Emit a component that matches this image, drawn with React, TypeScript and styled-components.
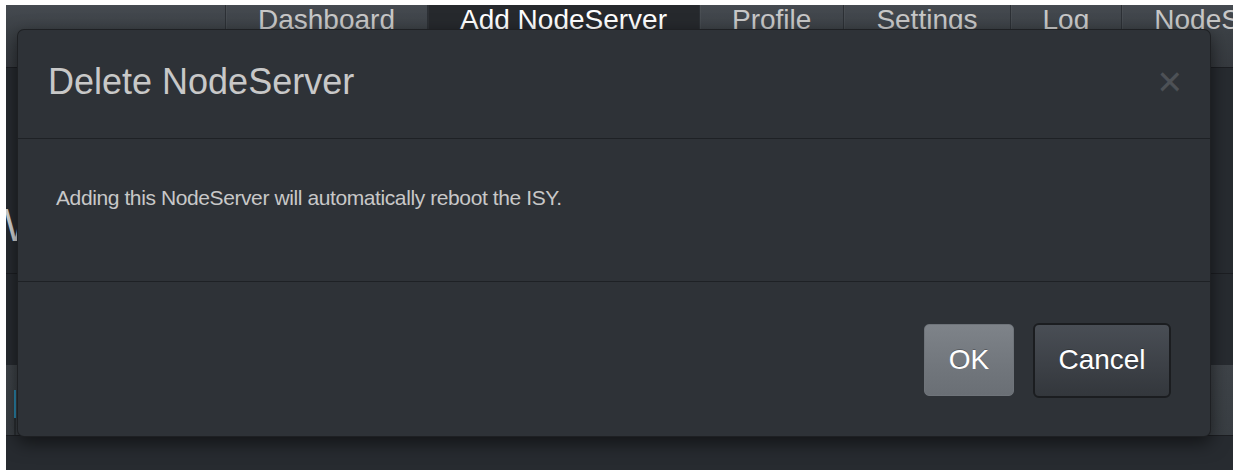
import React from "react";
import styled, { createGlobalStyle } from "styled-components";

const GlobalStyle = createGlobalStyle`
  html, body {
    margin: 0;
    padding: 0;
    background: #ffffff;
  }
  body {
    padding: 5px 0 0 6px;
    overflow: hidden;
    font-family: "Liberation Sans", Arial, sans-serif;
  }
`;

const Page = styled.div`
  position: relative;
  width: 1227px;
  height: 465px;
  overflow: hidden;
  background: #272b30;
  display: flex;
  flex-direction: column;
  color: #c8c8c8;
`;

const NavBar = styled.nav`
  flex: none;
  height: 62px;
  display: flex;
  align-items: stretch;
  background: linear-gradient(#454a50, #3b4045 45%, #363a3f);
  border-bottom: 1px solid #1c1e22;
`;

const Brand = styled.div`
  width: 219px;
  flex: none;
`;

const Tab = styled.a<{ $active?: boolean }>`
  flex: none;
  padding: 1px 32px 0;
  font-size: 28px;
  line-height: 28px;
  border-left: 1px solid #2c3035;
  box-shadow: inset 1px 0 0 rgba(255, 255, 255, 0.04);
  color: ${(p) => (p.$active ? "#ffffff" : "#c8c8c8")};
  background: ${(p) => (p.$active ? "#26292d" : "transparent")};
  text-decoration: none;
  white-space: nowrap;
`;

const Intro = styled.section`
  flex: none;
  height: 206px;
  border-bottom: 1px solid #1c1e22;
  padding-top: 134px;
  box-sizing: border-box;
`;

const Heading = styled.h1`
  margin: 0 0 0 -22px;
  font-size: 46px;
  line-height: 46px;
  font-weight: normal;
  color: #d6d6d6;
`;

const Panel = styled.section`
  flex: none;
  height: 91px;
`;

const ToolStrip = styled.section`
  flex: none;
  height: 70px;
  background: linear-gradient(#3e4348, #393e43);
  border-bottom: 1px solid #1c1e22;
  display: flex;
  align-items: flex-start;
`;

const Marker = styled.span`
  margin: 25px 0 0 8px;
  width: 2px;
  height: 45px;
  background: linear-gradient(#2b86ad 0 62%, #2a2e32 62%);
`;

const Rest = styled.div`
  flex: 1;
`;

const Dialog = styled.div`
  position: absolute;
  left: 11px;
  top: 24px;
  width: 1194px;
  height: 408px;
  box-sizing: border-box;
  display: flex;
  flex-direction: column;
  background: #2e3237;
  border: 1px solid rgba(0, 0, 0, 0.35);
  border-radius: 7px;
  box-shadow: 0 6px 18px rgba(0, 0, 0, 0.55);
`;

const DialogHeader = styled.header`
  flex: none;
  height: 109px;
  box-sizing: border-box;
  display: flex;
  align-items: center;
  justify-content: space-between;
  padding: 0 28px 5px 30px;
  border-bottom: 1px solid #1e2125;
`;

const Title = styled.h4`
  margin: 0;
  font-size: 36px;
  line-height: 40px;
  font-weight: normal;
  color: #c8c8c8;
`;

const Close = styled.button`
  border: none;
  background: none;
  padding: 0;
  font-family: "Liberation Sans", Arial, sans-serif;
  font-size: 42px;
  line-height: 40px;
  font-weight: normal;
  color: #4d5156;
  text-shadow: 0 1px 0 rgba(255, 255, 255, 0.04);
  cursor: pointer;
`;

const DialogBody = styled.div`
  flex: none;
  height: 143px;
  box-sizing: border-box;
  padding: 44px 38px 0;
  border-bottom: 1px solid #1e2125;
  font-size: 21px;
  letter-spacing: -0.4px;
  line-height: 30px;
  color: #c8c8c8;
`;

const DialogFooter = styled.footer`
  flex: 1;
  display: flex;
  align-items: center;
  justify-content: flex-end;
  gap: 19px;
  padding: 2px 39px 0 0;
`;

const Button = styled.button<{ $primary?: boolean }>`
  box-sizing: border-box;
  font-family: "Liberation Sans", Arial, sans-serif;
  font-size: 28px;
  line-height: 1;
  color: #ffffff;
  cursor: pointer;
  width: ${(p) => (p.$primary ? "90px" : "138px")};
  height: ${(p) => (p.$primary ? "72px" : "75px")};
  border-radius: ${(p) => (p.$primary ? "5px" : "6px")};
  border: ${(p) => (p.$primary ? "1px solid #6f747a" : "2px solid #1b1d20")};
  background: ${(p) =>
    p.$primary
      ? "linear-gradient(#7e8389, #71767c 60%, #6a6f75)"
      : "linear-gradient(#494e55, #3c4046 60%, #33373c)"};
  text-shadow: 0 -1px 0 rgba(0, 0, 0, 0.25);
`;

const tabs = ["Dashboard", "Add NodeServer", "Profile", "Settings", "Log", "NodeServers"];

export default function App() {
  return (
    <>
      <GlobalStyle />
      <Page>
        <NavBar>
          <Brand />
          {tabs.map((t) => (
            <Tab key={t} href="#" $active={t === "Add NodeServer"}>
              {t}
            </Tab>
          ))}
        </NavBar>
        <Intro>
          <Heading>W</Heading>
        </Intro>
        <Panel />
        <ToolStrip>
          <Marker />
        </ToolStrip>
        <Rest />

        <Dialog role="dialog" aria-modal="true">
          <DialogHeader>
            <Title>Delete NodeServer</Title>
            <Close aria-label="Close">×</Close>
          </DialogHeader>
          <DialogBody>Adding this NodeServer will automatically reboot the ISY.</DialogBody>
          <DialogFooter>
            <Button $primary>OK</Button>
            <Button>Cancel</Button>
          </DialogFooter>
        </Dialog>
      </Page>
    </>
  );
}
